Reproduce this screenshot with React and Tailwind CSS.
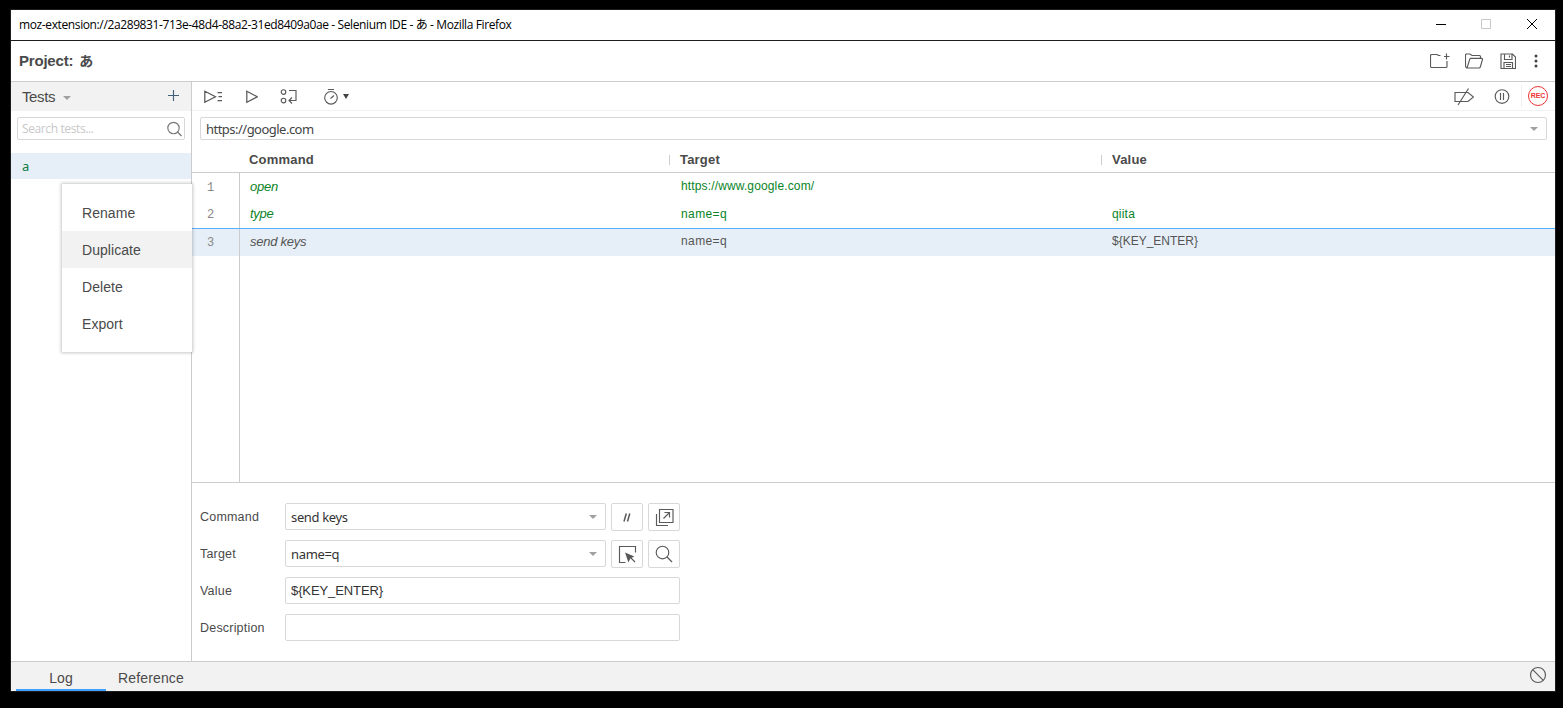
import React, { useState } from 'react';

const commands = [
  { command: 'open', target: 'https://www.google.com/', value: '', passed: true },
  { command: 'type', target: 'name=q', value: 'qiita', passed: true },
  { command: 'send keys', target: 'name=q', value: '${KEY_ENTER}', passed: false },
];

const menuItems = ['Rename', 'Duplicate', 'Delete', 'Export'];

function Icon({ w = 20, h = 20, className = '', children }) {
  return (
    <svg width={w} height={h} viewBox={`0 0 ${w} ${h}`} fill="none" stroke="#5a5a5a" strokeWidth="1.15" className={`shrink-0 ${className}`}>
      {children}
    </svg>
  );
}

function Caret({ className = '' }) {
  return (
    <svg width="8" height="4" viewBox="0 0 8 4" className={`shrink-0 ${className}`}>
      <path d="M0 0h8L4 4z" fill="#a0a0a0" />
    </svg>
  );
}

function SearchIcon({ className = '', small }) {
  return (
    <Icon w={small ? 16 : 18} h={small ? 16 : 18} className={className}>
      {small ? (
        <>
          <circle cx="6.500" cy="7" r="5.700" stroke="#777" />
          <path d="M10.500 11l4 4" stroke="#777" strokeWidth="1.300" />
        </>
      ) : (
        <>
          <circle cx="7.500" cy="7.500" r="6.300" />
          <path d="M12 12l5 5" strokeWidth="1.300" />
        </>
      )}
    </Icon>
  );
}

function TitleBar() {
  return (
    <div className="flex h-[31px] items-center border-b border-[#1c1c1c] pl-2 font-['Open_Sans','Noto_Sans_CJK_JP',sans-serif] text-[12px] text-black">
      <span className="whitespace-nowrap tracking-[-0.38px]">
        moz-extension://2a289831-713e-48d4-88a2-31ed8409a0ae - Selenium IDE - あ - Mozilla Firefox
      </span>
      <div className="ml-auto flex items-center gap-[35px] pr-[18px]">
        <svg width="10" height="10" stroke="#000"><path d="M0 4.500h10" /></svg>
        <svg width="11" height="10" fill="none" stroke="#c8c8c8" className="-mt-[2px]"><path d="M.5.500h9v9h-9z" /></svg>
        <svg width="10" height="10" stroke="#000" className="-mt-[2px]"><path d="M0 0l10 10M10 0L0 10" /></svg>
      </div>
    </div>
  );
}

function ProjectHeader() {
  return (
    <div className="flex h-[41px] items-center border-b border-[#ccc] pl-2 text-[15px] font-bold">
      <span className="tracking-[-0.2px]">Project:</span>
      <span className="ml-[6px] text-[14px]">あ</span>
      <div className="ml-auto flex items-center">
        <Icon w={20} h={16}>
          <path d="M10.500 2.500H8.500L7 1.500H2q-1.500 0-1.500 1v11q0 1 1 1h14.500q1 0 1-1V8M14 3.500h5.500M16.500.500v6" />
        </Icon>
        <Icon w={18} h={16} className="ml-[15px]">
          <path d="M2 15q-1.500-.5-1.500-2V2q0-1 1-1h3.500l2 1.500h7.500q1 0 1 1V5.500M2 15h12q1 0 1.300-1l2.200-7.500q.2-1.200-.8-1.200H6q-1 0-1.300 1z" />
        </Icon>
        <Icon w={16} h={16} className="ml-[17px]">
          <path d="M1 1h11.500l3 3v11.500H1zM4.500 1v5.500h7.500V1M9.500 2.500v2M4 15.500v-6h8.500v6M6 11.500h5M6 13.500h5" />
        </Icon>
        <svg width="4" height="14" viewBox="0 0 4 14" fill="#444" className="ml-[18px] mr-[17px]">
          <circle cx="2" cy="2" r="1.500" />
          <circle cx="2" cy="7" r="1.500" />
          <circle cx="2" cy="12" r="1.500" />
        </svg>
      </div>
    </div>
  );
}

function Sidebar() {
  return (
    <div className="w-[181px] shrink-0 border-r border-[#ccc]">
      <div className="flex h-[29px] items-center bg-[#f2f2f2] pl-[11px]">
        <span className="pt-[2px] text-[15px] tracking-[-0.4px]">Tests</span>
        <Caret className="ml-2 mt-[2px]" />
        <Icon w={11} h={11} className="ml-auto mr-[12px] -mt-[2px]">
          <path d="M0 5.500h11M5.500 0v11" stroke="#40607c" />
        </Icon>
      </div>
      <div className="mx-[6px] mt-[6px] flex h-[23px] items-center rounded-[2px] border border-[#d8d8d8] pl-1 font-['Open_Sans',sans-serif] text-[12px] text-[#c8c8c8]">
        <span className="pt-px tracking-[-0.38px]">Search tests...</span>
        <SearchIcon small className="ml-auto mr-px" />
      </div>
      <div className="mt-[13px] flex h-[26px] items-center bg-[#e6eff7] pl-[11px] pt-px font-['Noto_Sans',sans-serif] text-[13px] text-[#107c3c]">a</div>
    </div>
  );
}

function Toolbar() {
  return (
    <div className="flex h-[29px] items-center border-b border-[#f2f2f2] pl-3">
      <Icon w={19} h={14} className="mt-px">
        <path d="M.8 1.300v11L11.500 6.800zM13.500 2.500H18M14.500 6.500H18M13.500 10.500H18" strokeWidth="1.250" />
      </Icon>
      <Icon w={12} h={14} className="ml-[23px] mt-px">
        <path d="M.8 1.300v11L11.300 6.800z" strokeWidth="1.250" />
      </Icon>
      <Icon w={18} h={16} className="ml-[22px] mt-px">
        <circle cx="3.500" cy="3" r="2.300" />
        <circle cx="3.500" cy="11.500" r="2.300" />
        <path d="M9 1.500h7v10H9.500M12 8.500l-3 3 3 3" />
      </Icon>
      <Icon w={16} h={17} className="ml-[26px]">
        <circle cx="7" cy="9.800" r="6.300" />
        <path d="M4 1.500h6M6.500 10.500l3.500-3" />
      </Icon>
      <svg width="6" height="5" className="ml-[3px]" fill="#444"><path d="M0 0h6L3 5z" /></svg>
      <div className="ml-auto flex items-center">
        <Icon w={20} h={18} className="mt-px">
          <path d="M1 4.500h13L19.500 9l-5.500 4.500H1zM14.500.500L4 17" />
        </Icon>
        <Icon w={16} h={16} className="ml-[20px] mt-px">
          <circle cx="8" cy="7.500" r="6.800" />
          <path d="M6.500 4v7M9.500 4v7" />
        </Icon>
        <div className="ml-[11px] h-[22px] w-px bg-[#f0f0f0]" />
        <div className="ml-[6px] mr-[7px] flex size-5 items-center justify-center rounded-full border border-[#ee3333] pt-px text-[7px] font-bold tracking-[-0.15px] text-[#ee3333]">
          REC
        </div>
      </div>
    </div>
  );
}

function CommandTable({ selected, onSelect }) {
  return (
    <div className="flex h-[336px] flex-col border-b border-[#ccc]">
      <div className="flex h-[26px] items-center border-b border-[#ccc] text-[13px] font-bold tracking-[0.2px]">
        <div className="w-[477px] pl-[57px]">Command</div>
        <div className="flex w-[432px] items-center"><i className="mr-[10px] h-[10px] w-px bg-[#ccc]" />Target</div>
        <div className="flex items-center"><i className="mr-[10px] h-[10px] w-px bg-[#ccc]" />Value</div>
      </div>
      {commands.map((row, i) => (
        <div
          key={i}
          onClick={() => onSelect(i)}
          className={`flex shrink-0 text-[12px] ${i === 1 ? 'h-[27px]' : 'h-[28px]'} ${i === selected ? 'border-t border-[#57b0ff] bg-[#e6eff7]' : ''} ${row.passed ? 'text-[#0a8427]' : 'text-[#555]'}`}
        >
          <div className={`flex w-12 items-center border-r border-[#ccc] pl-[15px] font-['Liberation_Mono',monospace] text-[12px] text-[#888] ${i === 0 ? 'pt-[2px]' : ''}`}>{i + 1}</div>
          <div className={`flex w-[441px] items-center pl-[10px] text-[13px] italic tracking-[-0.25px] ${i === 0 ? '' : 'pb-[2px]'}`}>{row.command}</div>
          <div className={`flex w-[431px] items-center ${i === 0 ? 'tracking-[0.14px]' : 'tracking-[0.4px]'} ${i === 2 ? 'pb-1' : 'pb-[2px]'}`}>{row.target}</div>
          <div className={`flex items-center ${i === 2 ? 'pb-1' : 'pb-[2px] tracking-[0.2px]'}`}>{row.value}</div>
        </div>
      ))}
      <div className="w-12 flex-1 border-r border-[#ccc]" />
    </div>
  );
}

function Field({ label, value, select, children }) {
  return (
    <div className="mb-[9px] flex h-[28px] items-start">
      <label className="w-[85px] text-[12.5px] leading-[29px] tracking-[0.2px]">{label}</label>
      <div className={`flex h-[27px] items-center rounded-[2px] border border-[#d8d8d8] pl-[5px] text-[13px] text-[#333] ${select ? "w-[321px] font-['Noto_Sans',sans-serif] tracking-[-0.35px]" : 'w-[395px] tracking-[-0.1px]'}`}>
        <span className={select ? 'pt-[2px]' : ''}>{value}</span>
        {select && <Caret className="ml-auto mr-2" />}
      </div>
      {children}
    </div>
  );
}

function SquareButton({ children }) {
  return (
    <button className="ml-[5px] flex h-[28px] w-8 items-center justify-center rounded-[2px] border border-[#d8d8d8]">{children}</button>
  );
}

function CommandForm() {
  return (
    <div className="flex-1 pl-2 pt-5">
      <Field label="Command" value="send keys" select>
        <SquareButton>
          <Icon w={8} h={9}><path d="M3.300.500L1 8.500M6.800.500L4.500 8.500" strokeWidth="1.500" /></Icon>
        </SquareButton>
        <SquareButton>
          <Icon w={19} h={19}>
            <path d="M4.500 1.500h13.500v13H4.500zM1.500 6v11.500H13M8.500 10.500l5.500-5.500M9.500 4.500h5v5" />
          </Icon>
        </SquareButton>
      </Field>
      <Field label="Target" value="name=q" select>
        <SquareButton>
          <Icon w={19} h={19}>
            <path d="M7.500 17.500H1.500v-16H17.500V7.500M11 11l6 6" />
            <path d="M8 8.500l7 3-3 1.500-1.500 3z" fill="#555" />
          </Icon>
        </SquareButton>
        <SquareButton><SearchIcon /></SquareButton>
      </Field>
      <Field label="Value" value="${KEY_ENTER}" />
      <Field label="Description" value="" />
    </div>
  );
}

function ContextMenu() {
  return (
    <div className="absolute left-[62px] top-[184px] h-[168px] w-[130px] bg-white py-[10px] text-[14px] shadow-[0_0_3px_1px_rgba(0,0,0,0.22)]">
      {menuItems.map((item) => (
        <div key={item} className={`flex h-[37px] items-center pl-5 pt-[2px] tracking-[0.05px] ${item === 'Duplicate' ? 'bg-[#f2f2f2]' : ''}`}>{item}</div>
      ))}
    </div>
  );
}

export default function App() {
  const [selected, setSelected] = useState(2);

  return (
    <div className="relative h-[708px] w-[1563px] overflow-hidden bg-black pl-[10px] pt-[9px] font-['Liberation_Sans','Noto_Sans_CJK_JP',sans-serif] text-[#4a4a4a]">
      <div className="flex h-[683px] w-[1546px] flex-col border border-[#1c1c1c] bg-white">
        <TitleBar />
        <ProjectHeader />
        <div className="flex h-[579px] shrink-0">
          <Sidebar />
          <div className="flex min-w-0 flex-1 flex-col">
            <Toolbar />
            <div className="mx-2 mb-[7px] mt-[6px] flex h-[23px] shrink-0 items-center rounded-[2px] border border-[#d8d8d8] pl-[5px] font-['Noto_Sans',sans-serif] text-[13px] tracking-[-0.52px] text-[#444]">
              <span className="pt-[2px]">https://google.com</span>
              <Caret className="ml-auto mr-2" />
            </div>
            <CommandTable selected={selected} onSelect={setSelected} />
            <CommandForm />
          </div>
        </div>
        <div className="flex flex-1 items-stretch border-t border-[#ccc] bg-[#f2f2f2] pl-[5px] text-[14px]">
          <div className="flex w-[90px] items-center justify-center border-b-2 border-[#40a0ff] pt-[5px]">Log</div>
          <div className="flex items-center pl-3 pt-[3px] tracking-[0.15px]">Reference</div>
          <Icon w={18} h={18} className="ml-auto mr-2 mt-1">
            <circle cx="9" cy="9" r="7.500" />
            <path d="M3.700 3.700l10.600 10.600" />
          </Icon>
        </div>
      </div>
      <ContextMenu />
    </div>
  );
}
